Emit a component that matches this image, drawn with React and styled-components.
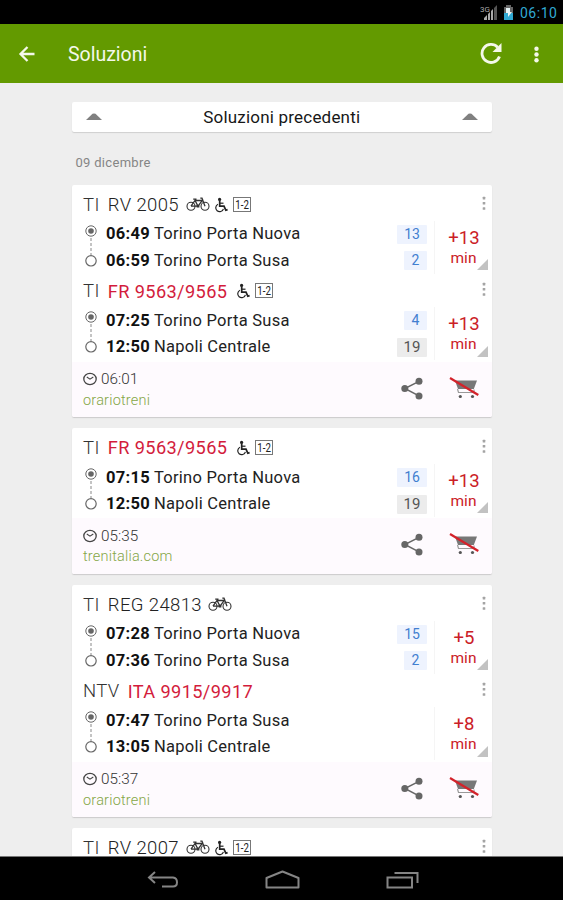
import React from "react";
import styled, { createGlobalStyle } from "styled-components";

const GlobalStyle = createGlobalStyle`
  * {
    box-sizing: border-box;
  }
  body {
    margin: 0;
    background: #eeeeee;
    font-family: Roboto, "Liberation Sans", sans-serif;
  }
`;

const Screen = styled.div`
  display: flex;
  flex-direction: column;
  width: 563px;
  height: 900px;
  overflow: hidden;
  background: #eeeeee;
  white-space: nowrap;

  svg {
    display: block;
    flex: none;
  }
`;

const StatusBar = styled.div`
  flex: 0 0 23.5px;
  display: flex;
  align-items: center;
  justify-content: flex-end;
  padding: 2px 5px 0 0;
  background: #000;
`;

const Clock = styled.span`
  width: 38px;
  margin-left: 6px;
  color: #31a9d3;
  font-size: 14px;
  line-height: 20px;
  letter-spacing: 0.5px;
`;

const AppBar = styled.header`
  flex: 0 0 59.5px;
  display: flex;
  align-items: center;
  padding: 2px 24px 0 17px;
  background: #639a00;
  color: #f4f8ea;
`;

const Title = styled.h1`
  flex: 1;
  margin: 0 0 0 32px;
  font-size: 19.5px;
  font-weight: 400;
  letter-spacing: 0;
`;

const MenuButton = styled.div`
  margin-left: 32px;
`;

const Content = styled.main`
  flex: 1;
  min-height: 0;
  overflow: hidden;
  padding: 19px 71px 0 71.5px;
`;

const Previous = styled.div`
  display: flex;
  align-items: center;
  justify-content: space-between;
  height: 30px;
  padding: 0 14px;
  border-radius: 2px;
  background: #fff;
  box-shadow: 0 1px 1px #cfcfcf;
  color: #171717;
  font-size: 17px;
  letter-spacing: 0.2px;
`;

const DateLabel = styled.div`
  height: 53px;
  padding: 22px 0 0 4px;
  color: #858585;
  font-size: 13px;
  line-height: 18px;
  letter-spacing: 0.3px;
`;

const Card = styled.article`
  margin-bottom: 11.5px;
  padding-top: 3.5px;
  border-radius: 2px;
  background: #fff;
  box-shadow: 0 1px 1px #cbcacb;
`;

const LegBox = styled.section`
  height: 86.5px;
  padding: 0 3px 0 11.5px;
`;

const LegHeader = styled.div`
  display: flex;
  align-items: center;
  gap: 4.5px;
  height: 32px;
`;

const Carrier = styled.span`
  margin-right: 3.5px;
  color: #333;
  font-size: 18.5px;
  font-weight: 300;
  letter-spacing: 0.4px;
`;

const TrainName = styled.span`
  margin-right: ${(p) => (p.$fast ? 4.5 : 2)}px;
  color: ${(p) => (p.$fast ? "#d31c3c" : "#222")};
  font-size: ${(p) => (p.$fast ? 18.2 : 18.5)}px;
  font-weight: ${(p) => (p.$fast ? 400 : 300)};
  letter-spacing: 0.38px;
`;

const Dots = styled.div`
  margin: -3px 3px 0 auto;
`;

const LegBody = styled.div`
  display: flex;
  height: 53px;
`;

const Stops = styled.div`
  flex: 1;
  margin-left: 7px;
`;

const Stop = styled.div`
  display: flex;
  align-items: center;
  height: 26.5px;
  color: #222;
  font-size: 16.5px;
  letter-spacing: 0.26px;
`;

const Time = styled.b`
  width: 48px;
  color: #111;
  font-weight: 700;
  letter-spacing: 0.3px;
`;

const Platform = styled.span`
  width: ${(p) => (p.$wide ? 30 : 23)}px;
  height: 19px;
  margin: 1px 7px 0 auto;
  border-radius: 1px;
  background: ${(p) => (p.$grey ? "#ececec" : "#eef3fe")};
  color: ${(p) => (p.$grey ? "#555" : "#427fd0")};
  font-size: ${(p) => (p.$grey ? 15 : 14)}px;
  line-height: 19px;
  letter-spacing: 0;
  text-align: center;
`;

const Delay = styled.div`
  position: relative;
  width: 55px;
  padding: 7px 0 0 4px;
  border-left: 1px solid #f5f5f5;
  color: #cb2026;
  text-align: center;
`;

const Minutes = styled.div`
  font-size: 18.5px;
  line-height: 21px;
`;

const Unit = styled.div`
  padding-right: 1px;
  font-size: 15.5px;
  line-height: 19px;
`;

const Corner = styled.i`
  position: absolute;
  right: 1.5px;
  bottom: 3.5px;
  border: solid transparent;
  border-width: 11px 0 0 11px;
  border-bottom: 11px solid #c2c2c2;
  border-top: 0;
`;

const CardFooter = styled.footer`
  display: flex;
  height: 55.25px;
  padding: 7px 12px 0 11.5px;
  border-radius: 0 0 2px 2px;
  background: #fefafe;
`;

const Info = styled.div`
  flex: 1;
`;

const Duration = styled.div`
  display: flex;
  align-items: center;
  gap: 4px;
  height: 21px;
  color: #333;
  font-size: 15.3px;
  font-weight: 300;
`;

const Source = styled.div`
  color: #84a646;
  font-size: 14.5px;
  font-weight: 300;
  line-height: 21px;
  letter-spacing: 0.2px;
`;

const Actions = styled.div`
  display: flex;
  align-items: flex-start;
  gap: 25px;
  padding-top: 8px;
`;

const NavBar = styled.nav`
  flex: 0 0 44.5px;
  display: flex;
  align-items: center;
  justify-content: center;
  gap: 84px;
  padding: 3px 0 0 2px;
  border-top: 1px solid #777;
  background: #000;
`;

function Triangle() {
  return (
    <svg width="16" height="8" viewBox="0 0 16 8">
      <path d="M0 7L6.5 0.8Q8 0 9.5 0.8L16 7Z" fill="#808080" />
    </svg>
  );
}

function MoreDots() {
  return (
    <svg width="4" height="15" viewBox="0 0 4 15" fill="#a4a4a4">
      <rect x="0.7" y="0.8" width="2.6" height="2.6" rx="0.5" />
      <rect x="0.7" y="6" width="2.6" height="2.6" rx="0.5" />
      <rect x="0.7" y="11.2" width="2.6" height="2.6" rx="0.5" />
    </svg>
  );
}

function Bike() {
  return (
    <svg width="24" height="15" viewBox="0 0 24 15" fill="none" stroke="#333">
      <circle cx="5" cy="9.2" r="4" strokeWidth="1.1" />
      <circle cx="19" cy="9.2" r="4" strokeWidth="1.1" />
      <path d="M5 9.2L9 3.5L12 9.2H5M12 9.2L16.3 3.5H9M14.3 1.2H16L19 9.2M7.2 2.2H10.5" strokeWidth="1.3" />
      <path d="M10.6 7.9H13.4V10.5H10.6Z" fill="#333" stroke="none" />
    </svg>
  );
}

function Wheelchair() {
  return (
    <svg width="14" height="16" viewBox="0 0 14 16" fill="none" stroke="#222">
      <circle cx="5.6" cy="2.4" r="1.6" fill="#222" stroke="none" />
      <path d="M5.7 3.8V9.1H10L11.8 13.2L13.6 12.6" strokeWidth="1.7" />
      <path d="M6 6.2H9.5" strokeWidth="1.2" />
      <path d="M4 7.2A3.9 3.9 0 1 0 9.4 11.8" strokeWidth="1.2" />
    </svg>
  );
}

function Classes() {
  return (
    <svg width="18" height="16" viewBox="0 0 18 16">
      <rect x="0.5" y="0.5" width="17" height="14" fill="#fff" stroke="#777" />
      <text x="2.3" y="12.1" fontFamily="Roboto, sans-serif" fontSize="12.5" fill="#222" textLength="13.6" lengthAdjust="spacingAndGlyphs">
        1-2
      </text>
    </svg>
  );
}

function Route() {
  return (
    <svg width="16" height="53" viewBox="0 0 16 53" fill="none" stroke="#666">
      <circle cx="8" cy="10" r="5.2" strokeWidth="1" />
      <circle cx="8" cy="10" r="2.8" fill="#666" stroke="none" />
      <path d="M8 17V34" strokeDasharray="3 2" stroke="#888" />
      <circle cx="8" cy="39.8" r="5.2" strokeWidth="1.2" />
    </svg>
  );
}

function ClockIcon() {
  return (
    <svg width="14" height="14" viewBox="0 0 14 14" fill="none" stroke="#444">
      <ellipse cx="7" cy="7" rx="6.2" ry="5.6" strokeWidth="1.3" />
      <path d="M3.8 5L7 7.2L10.3 5" strokeWidth="1.1" />
    </svg>
  );
}

function Share() {
  return (
    <svg width="23" height="23" viewBox="0 0 23 23" fill="#666" stroke="#666">
      <path d="M18 4.3L3.8 11.5L18 18.9" fill="none" strokeWidth="1.5" />
      <circle cx="18" cy="4.3" r="3.5" stroke="none" />
      <circle cx="3.8" cy="11.5" r="3.5" stroke="none" />
      <circle cx="18" cy="18.9" r="3.5" stroke="none" />
    </svg>
  );
}

function NoCart() {
  return (
    <svg width="31" height="22" viewBox="0 0 31 22" fill="none">
      <path d="M6 3.5H28L24.8 12H9Z" fill="#777" />
      <path d="M8.5 12L9.5 15.5H25V12.5" stroke="#999" strokeWidth="1.2" />
      <circle cx="11.3" cy="19.5" r="1.6" fill="#555" />
      <circle cx="23.5" cy="19.5" r="1.6" fill="#555" />
      <path d="M1 1L29.3 18" stroke="#d3222a" strokeWidth="2.2" />
    </svg>
  );
}

function Leg({ carrier, train, fast, icons = "", stops = [], delay }) {
  return (
    <LegBox>
      <LegHeader>
        <Carrier>{carrier}</Carrier>
        <TrainName $fast={fast}>{train}</TrainName>
        {icons.includes("b") && <Bike />}
        {icons.includes("w") && <Wheelchair />}
        {icons.includes("c") && <Classes />}
        <Dots>
          <MoreDots />
        </Dots>
      </LegHeader>
      {stops.length > 0 && (
        <LegBody>
          <Route />
          <Stops>
            {stops.map(([time, station, platform, grey]) => (
              <Stop key={time}>
                <Time>{time}</Time>
                {station}
                {platform && (
                  <Platform $wide={platform.length > 1} $grey={grey}>
                    {platform}
                  </Platform>
                )}
              </Stop>
            ))}
          </Stops>
          <Delay>
            <Minutes>{delay}</Minutes>
            <Unit>min</Unit>
            <Corner />
          </Delay>
        </LegBody>
      )}
    </LegBox>
  );
}

const solutions = [
  {
    duration: "06:01",
    source: "orariotreni",
    legs: [
      {
        carrier: "TI",
        train: "RV 2005",
        icons: "bwc",
        delay: "+13",
        stops: [
          ["06:49", "Torino Porta Nuova", "13"],
          ["06:59", "Torino Porta Susa", "2"],
        ],
      },
      {
        carrier: "TI",
        train: "FR 9563/9565",
        fast: true,
        icons: "wc",
        delay: "+13",
        stops: [
          ["07:25", "Torino Porta Susa", "4"],
          ["12:50", "Napoli Centrale", "19", true],
        ],
      },
    ],
  },
  {
    duration: "05:35",
    source: "trenitalia.com",
    legs: [
      {
        carrier: "TI",
        train: "FR 9563/9565",
        fast: true,
        icons: "wc",
        delay: "+13",
        stops: [
          ["07:15", "Torino Porta Nuova", "16"],
          ["12:50", "Napoli Centrale", "19", true],
        ],
      },
    ],
  },
  {
    duration: "05:37",
    source: "orariotreni",
    legs: [
      {
        carrier: "TI",
        train: "REG 24813",
        icons: "b",
        delay: "+5",
        stops: [
          ["07:28", "Torino Porta Nuova", "15"],
          ["07:36", "Torino Porta Susa", "2"],
        ],
      },
      {
        carrier: "NTV",
        train: "ITA 9915/9917",
        fast: true,
        delay: "+8",
        stops: [
          ["07:47", "Torino Porta Susa"],
          ["13:05", "Napoli Centrale"],
        ],
      },
    ],
  },
  { legs: [{ carrier: "TI", train: "RV 2007", icons: "bwc" }] },
];

export default function App() {
  return (
    <Screen>
      <GlobalStyle />
      <StatusBar>
        <svg width="34" height="18" viewBox="0 0 34 18">
          <text x="0" y="7.5" fontFamily="Roboto, sans-serif" fontSize="8" fill="#aaa">3G</text>
          <path d="M4 16V14L7 11V16ZM8 16V10L10 8V16ZM11 16V7L13 5V16Z" fill="#aaa" />
          <path d="M14 16V4L17 1V16Z" fill="#555" />
          <path d="M24 3H26V1H31V3H33V16H24Z" fill="#666" />
          <path d="M24 9H33V16H24Z" fill="#31a9d3" />
          <path d="M26 4H30V8H32L28 13V9H26Z" fill="#e8f5f8" />
        </svg>
        <Clock>06:10</Clock>
      </StatusBar>
      <AppBar>
        <svg width="19" height="18" viewBox="0 0 19 18" fill="none" stroke="#f4f8ea" strokeWidth="2.3">
          <path d="M10.5 2L3.5 9L10.5 16M3.5 9H17.5" />
        </svg>
        <Title>Soluzioni</Title>
        <svg width="22" height="22" viewBox="0 0 22 22">
          <path d="M17.6 4.3A9 9 0 1 0 19.5 13.5" fill="none" stroke="#f4f8ea" strokeWidth="2.8" />
          <path d="M21.5 0V9H12.5Z" fill="#f4f8ea" />
        </svg>
        <MenuButton>
          <svg width="5" height="17" viewBox="0 0 5 17" fill="#f4f8ea">
            <circle cx="2.5" cy="2.8" r="2.2" />
            <circle cx="2.5" cy="8.5" r="2.2" />
            <circle cx="2.5" cy="14.2" r="2.2" />
          </svg>
        </MenuButton>
      </AppBar>
      <Content>
        <Previous>
          <Triangle />
          <span>Soluzioni precedenti</span>
          <Triangle />
        </Previous>
        <DateLabel>09 dicembre</DateLabel>
        {solutions.map((solution, i) => (
          <Card key={i}>
            {solution.legs.map((leg) => (
              <Leg key={leg.train} {...leg} />
            ))}
            {solution.duration && (
              <CardFooter>
                <Info>
                  <Duration>
                    <ClockIcon />
                    {solution.duration}
                  </Duration>
                  <Source>{solution.source}</Source>
                </Info>
                <Actions>
                  <Share />
                  <NoCart />
                </Actions>
              </CardFooter>
            )}
          </Card>
        ))}
      </Content>
      <NavBar>
        <svg width="34" height="20" viewBox="0 0 34 20" fill="none" stroke="#858585" strokeWidth="2">
          <path d="M8 2L2 7.5L8 13M2 7.5H26Q30 8 30 12.2Q30 16.5 26 16.5H15" />
        </svg>
        <svg width="36" height="20" viewBox="0 0 36 20" fill="none" stroke="#858585" strokeWidth="2">
          <path d="M1.5 17.5V8L17.5 1.5L33.5 8V17.5Z" strokeLinejoin="round" />
        </svg>
        <svg width="34" height="20" viewBox="0 0 34 20" fill="none" stroke="#858585" strokeWidth="2">
          <rect x="2.5" y="7.5" width="24.5" height="10" />
          <path d="M9.5 3H32.5V13" />
        </svg>
      </NavBar>
    </Screen>
  );
}
